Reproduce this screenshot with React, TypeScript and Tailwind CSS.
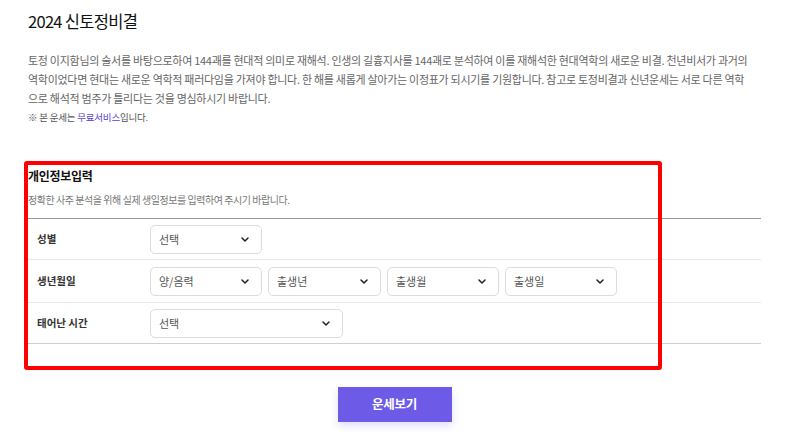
import React from "react";

const Chevron = () => (
  <svg width="8" height="5" viewBox="0 0 8 5" fill="none" className="shrink-0">
    <path d="M1 1l3 3 3-3" stroke="#222" strokeWidth="1.5" strokeLinecap="round" strokeLinejoin="round" />
  </svg>
);

const Select = ({ label, w }: { label: string; w: string }) => (
  <div
    className={`${w} h-[29px] flex items-center justify-between pl-[8px] pr-[12px] border border-[#dcdcdc] rounded-[5px] bg-white text-[11px] text-[#555]`}
  >
    <span>{label}</span>
    <Chevron />
  </div>
);

export default function App() {
  return (
    <div
      className="relative w-[804px] h-[445px] bg-white overflow-hidden"
      style={{ fontFamily: '"Noto Sans CJK KR", "Noto Sans", sans-serif' }}
    >
      <div className="pl-[28px] w-[761px]">
        <h1 className="pt-[9px] text-[16.5px] leading-[24px] text-[#111] tracking-[-0.7px]">2024 신토정비결</h1>
        <p className="mt-[18px] text-[11px] leading-[19px] text-[#666] tracking-[-0.28px] whitespace-nowrap">
          토정 이지함님의 술서를 바탕으로하여 144괘를 현대적 의미로 재해석. 인생의 길흉지사를 144괘로 분석하여 이를 재해석한 현대역학의 새로운 비결. 천년비서가 과거의
          <br />
          역학이었다면 현대는 새로운 역학적 패러다임을 가져야 합니다. 한 해를 새롭게 살아가는 이정표가 되시기를 기원합니다. 참고로 토정비결과 신년운세는 서로 다른 역학
          <br />
          으로 해석적 범주가 틀리다는 것을 명심하시기 바랍니다.
        </p>
        <p className="text-[9.5px] leading-[19px] text-[#555] tracking-[-0.2px]">
          ※ 본 운세는 <span className="text-[#5b3fd1]">무료서비스</span>입니다.
        </p>

        <div className="mt-[40px]">
          <h2 className="text-[12px] leading-[18px] font-bold text-[#111] tracking-[-0.3px]">개인정보입력</h2>
          <p className="mt-[8px] text-[10px] leading-[14px] text-[#777] tracking-[-0.45px]">
            정확한 사주 분석을 위해 실제 생일정보를 입력하여 주시기 바랍니다.
          </p>
          <div className="mt-[11px] border-t-[1.5px] border-[#999]">
            <div className="flex items-center h-[41px] border-b border-[#e8e8e8]">
              <div className="w-[122px] pl-[9px] text-[10.5px] font-semibold text-[#333]">성별</div>
              <Select label="선택" w="w-[112px]" />
            </div>
            <div className="flex items-center h-[43px] border-b border-[#e8e8e8]">
              <div className="w-[122px] pl-[9px] text-[10.5px] font-semibold text-[#333]">생년월일</div>
              <div className="flex gap-[6px]">
                <Select label="양/음력" w="w-[112px]" />
                <Select label="출생년" w="w-[113px]" />
                <Select label="출생월" w="w-[112px]" />
                <Select label="출생일" w="w-[112px]" />
              </div>
            </div>
            <div className="flex items-center h-[41px] border-b border-[#cfcfcf]">
              <div className="w-[122px] pl-[9px] text-[10.5px] font-semibold text-[#333]">태어난 시간</div>
              <Select label="선택" w="w-[193px]" />
            </div>
          </div>
        </div>
      </div>

      <div className="flex justify-center w-[789px] mt-[43px]">
        <button className="w-[114px] h-[35px] bg-[#6d5be8] text-white text-[12.5px] font-bold shadow-[0_4px_8px_rgba(109,91,232,0.2)] tracking-[-0.3px]">
          운세보기
        </button>
      </div>

      <div className="absolute left-[24px] top-[161px] w-[638px] h-[209px] border-4 border-[#ff0000] rounded-[3px] pointer-events-none" />
    </div>
  );
}
